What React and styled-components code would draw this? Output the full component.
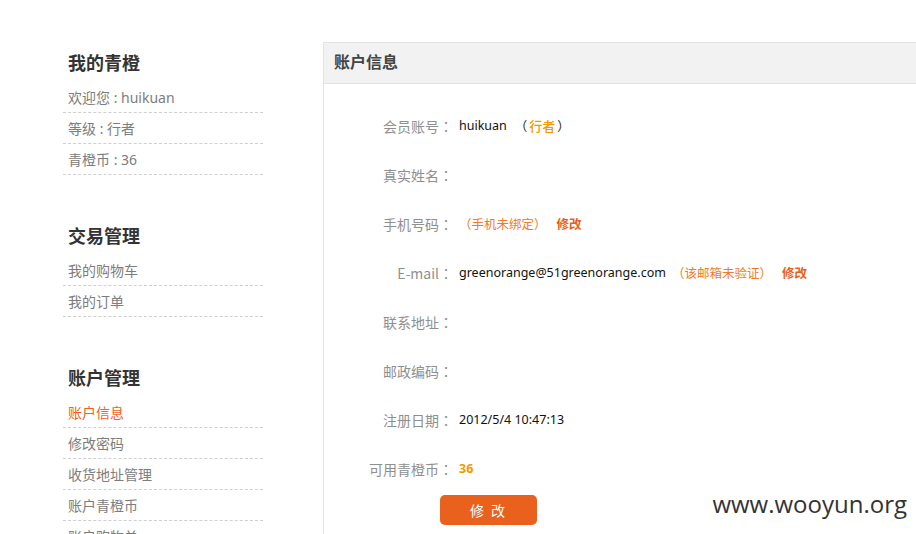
import React from "react";
import styled, { createGlobalStyle } from "styled-components";

const GlobalStyle = createGlobalStyle`
  html, body {
    margin: 0;
    padding: 0;
    background: #fff;
  }
  body {
    font-family: "Noto Sans", "Noto Sans CJK SC", sans-serif;
  }
`;

const cjk = `"Noto Sans CJK SC", sans-serif`;

const menu = [
  {
    title: "我的青橙",
    items: [{ text: "欢迎您 : huikuan" }, { text: "等级 : 行者" }, { text: "青橙币 : 36" }],
  },
  {
    title: "交易管理",
    items: [{ text: "我的购物车" }, { text: "我的订单" }],
  },
  {
    title: "账户管理",
    items: [
      { text: "账户信息", active: true },
      { text: "修改密码" },
      { text: "收货地址管理" },
      { text: "账户青橙币" },
      { text: "账户购物单" },
    ],
  },
];

const Field = ({ label, children }) => (
  <Row>
    <Label>
      {label}
      <Colon>：</Colon>
    </Label>
    {children && <Value>{children}</Value>}
  </Row>
);

const App = () => {
  return (
    <Page>
      <GlobalStyle />
      <Sidebar>
        {menu.map((group) => (
          <Group key={group.title}>
            <GroupTitle>{group.title}</GroupTitle>
            {group.items.map((item) => (
              <MenuItem key={item.text} active={item.active}>
                {item.text}
              </MenuItem>
            ))}
          </Group>
        ))}
      </Sidebar>

      <Panel>
        <PanelHeader>账户信息</PanelHeader>
        <Form>
          <Field label="会员账号">
            huikuan
            <Paren>
              （<Level>行者</Level>）
            </Paren>
          </Field>
          <Field label="真实姓名" />
          <Field label="手机号码">
            <Warn>（手机未绑定）</Warn>
            <EditLink>修改</EditLink>
          </Field>
          <Field label="E-mail">
            greenorange@51greenorange.com
            <Warn spaced>（该邮箱未验证）</Warn>
            <EditLink>修改</EditLink>
          </Field>
          <Field label="联系地址" />
          <Field label="邮政编码" />
          <Field label="注册日期">2012/5/4 10:47:13</Field>
          <Field label="可用青橙币">
            <Coins>36</Coins>
          </Field>
          <SubmitButton>修 改</SubmitButton>
        </Form>
      </Panel>

      <Watermark>www.wooyun.org</Watermark>
    </Page>
  );
};

const Page = styled.div`
  position: relative;
  display: flex;
  align-items: flex-start;
  width: 916px;
  height: 534px;
  overflow: hidden;
  padding-left: 63px;
  box-sizing: border-box;
`;

const Sidebar = styled.div`
  width: 200px;
  flex-shrink: 0;
  padding-top: 46px;
  display: flex;
  flex-direction: column;
  gap: 44px;
`;

const Group = styled.div`
  display: flex;
  flex-direction: column;
`;

const GroupTitle = styled.h3`
  margin: 0 0 2px;
  padding-left: 5px;
  height: 34px;
  line-height: 34px;
  font-size: 18px;
  font-weight: bold;
  color: #333;
`;

const MenuItem = styled.div`
  height: 30px;
  line-height: 32px;
  padding-left: 5px;
  font-size: 14px;
  color: ${(p) => (p.active ? "#f0601e" : "#7d7d7d")};
  border-bottom: 1px dashed #cfcfcf;
  white-space: nowrap;
`;

const Panel = styled.div`
  margin-left: 60px;
  margin-top: 42px;
  width: 700px;
  flex-shrink: 0;
  min-height: 520px;
  border-left: 1px solid #e3e3e3;
  border-top: 1px solid #e3e3e3;
`;

const PanelHeader = styled.div`
  height: 40px;
  line-height: 38px;
  padding-left: 10px;
  background: #f2f2f2;
  border-bottom: 1px solid #e3e3e3;
  font-size: 16px;
  font-weight: bold;
  color: #444;
`;

const Form = styled.div`
  padding-top: 17px;
  display: flex;
  flex-direction: column;
`;

const Row = styled.div`
  display: flex;
  align-items: center;
  height: 49px;
`;

const Label = styled.div`
  width: 129px;
  flex-shrink: 0;
  text-align: right;
  font-family: ${cjk};
  font-size: 14px;
  color: #8f8f8f;
`;

const Colon = styled.span`
  font-family: "Noto Sans CJK TC", sans-serif;
`;

const Value = styled.div`
  margin-left: 6px;
  display: flex;
  align-items: center;
  font-size: 12.5px;
  color: #111;
  white-space: nowrap;
`;

const Paren = styled.span`
  margin-left: 8px;
  font-family: ${cjk};
  color: #222;
`;

const Level = styled.span`
  margin: 0 2px;
  font-size: 13px;
  color: #f39800;
  font-weight: 500;
`;

const Warn = styled.span`
  margin-left: ${(p) => (p.spaced ? "6px" : "0")};
  font-family: ${cjk};
  color: #f07a2a;
`;

const EditLink = styled.span`
  margin-left: 10px;
  font-family: ${cjk};
  color: #e8601a;
  font-weight: bold;
  cursor: pointer;
`;

const Coins = styled.span`
  color: #f39800;
  font-weight: bold;
`;

const SubmitButton = styled.button`
  margin: 2px 0 0 116px;
  width: 97px;
  height: 30px;
  border: none;
  border-radius: 5px;
  background: #e9611c;
  color: #fff;
  font-family: ${cjk};
  font-size: 14px;
  letter-spacing: 2px;
  cursor: pointer;
`;

const Watermark = styled.div`
  position: absolute;
  right: 9px;
  bottom: 14px;
  font-family: "Open Sans", sans-serif;
  font-size: 24px;
  color: #333;
`;

export default App;
